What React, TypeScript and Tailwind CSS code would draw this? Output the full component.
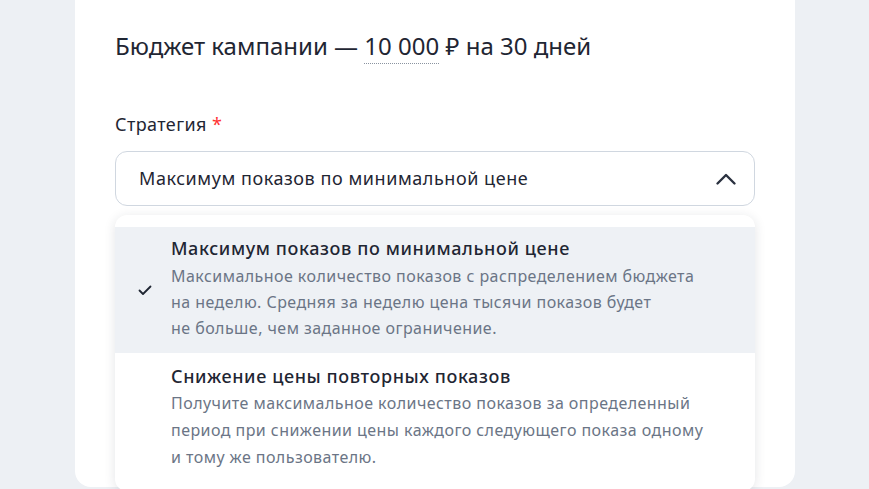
export default function App() {
  const font = { fontFamily: '"Noto Sans", "Open Sans", sans-serif' };
  return (
    <div className="w-[869px] h-[489px] overflow-hidden bg-[#edf0f4] text-[#1f2633]" style={font}>
      <div className="ml-[75px] w-[720px] h-[487px] bg-white rounded-b-[16px] px-[40px] pt-[30px] relative">
        <h2 className="text-[24px] leading-[32px] font-normal tracking-[0px]">
          Бюджет кампании —{" "}
          <span className="border-b border-dotted border-[#8a93a0] pb-[1px]">10 000</span> ₽ на 30 дней
        </h2>
        <div className="mt-[50px] text-[18px] leading-[24px] tracking-[0.4px]">
          Стратегия <span className="text-[#f33]">*</span>
        </div>
        <div className="mt-[15px] h-[55px] border border-[#d0d7e0] rounded-[12px] flex items-center justify-between pl-[23px] pr-[16px] text-[18px] tracking-[0.55px]">
          <span>Максимум показов по минимальной цене</span>
          <svg width="24" height="24" viewBox="0 0 24 24" fill="none" className="text-[#2b3240]">
            <path d="M3.5 16.5 L12 8 L20.5 16.5" stroke="currentColor" strokeWidth="2.4" strokeLinecap="round" strokeLinejoin="round" />
          </svg>
        </div>
        <div className="absolute left-[40px] top-[215px] w-[640px] bg-white rounded-[12px] shadow-[0_2px_12px_rgba(30,40,60,0.12)] pt-[12px] pb-[20px]">
          <div className="bg-[#eef1f5] flex items-center h-[126px]">
            <div className="w-[56px] flex justify-center">
              <svg width="16" height="16" viewBox="0 0 16 16" fill="none" className="text-[#1f2633] ml-[4px]">
                <path d="M2.5 8.5 L6 12 L13.5 4.5" stroke="currentColor" strokeWidth="1.8" strokeLinecap="round" strokeLinejoin="round" />
              </svg>
            </div>
            <div className="flex flex-col pt-[9px] pb-[12px] self-stretch">
              <div className="text-[18px] leading-[24px] font-medium tracking-[0.6px]">Максимум показов по минимальной цене</div>
              <div className="mt-[3px] text-[16px] leading-[26px] text-[#6b7586] tracking-[0.45px]">
                Максимальное количество показов с распределением бюджета
                <br />
                на неделю. Средняя за неделю цена тысячи показов будет
                <br />
                не больше, чем заданное ограничение.
              </div>
            </div>
          </div>
          <div className="flex pl-[56px] pt-[11px]">
            <div className="flex flex-col">
              <div className="text-[18px] leading-[24px] font-medium tracking-[0.6px]">Снижение цены повторных показов</div>
              <div className="mt-[2px] text-[16px] leading-[27px] text-[#6b7586] tracking-[0.45px]">
                Получите максимальное количество показов за определенный
                <br />
                период при снижении цены каждого следующего показа одному
                <br />
                и тому же пользователю.
              </div>
            </div>
          </div>
        </div>
      </div>
    </div>
  );
}
